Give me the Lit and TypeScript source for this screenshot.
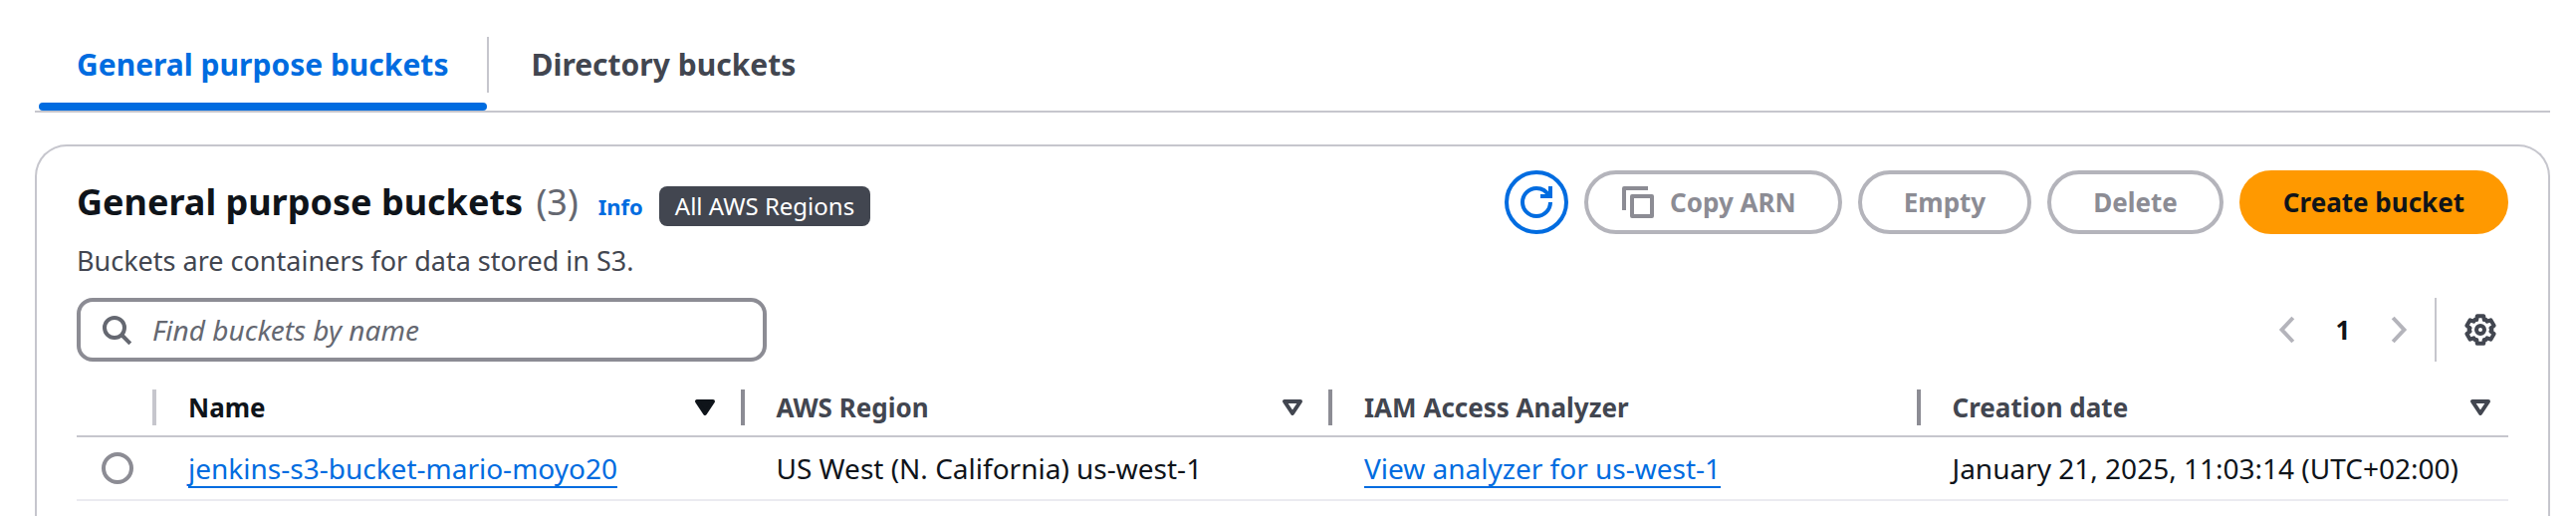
import { LitElement, html, css, svg } from "lit";
import { customElement, state } from "lit/decorators.js";
import { classMap } from "lit/directives/class-map.js";

interface Bucket {
  name: string;
  region: string;
  regionCode: string;
  created: string;
}

interface Column {
  label: string;
  sort: "active" | "idle" | "none";
}

const BUCKETS: Bucket[] = [
  {
    name: "jenkins-s3-bucket-mario-moyo20",
    region: "US West (N. California) us-west-1",
    regionCode: "us-west-1",
    created: "January 21, 2025, 11:03:14 (UTC+02:00)",
  },
];

const COLUMNS: Column[] = [
  { label: "Name", sort: "active" },
  { label: "AWS Region", sort: "idle" },
  { label: "IAM Access Analyzer", sort: "none" },
  { label: "Creation date", sort: "idle" },
];

const TABS = ["General purpose buckets", "Directory buckets"];

// Outline of a six-toothed gear centred in a 16-unit box.
const gearOutline = (): string => {
  const points: string[] = [];
  const add = (deg: number, r: number) => {
    const a = (deg * Math.PI) / 180;
    points.push(`${(8 + r * Math.sin(a)).toFixed(2)} ${(8 - r * Math.cos(a)).toFixed(2)}`);
  };
  for (let t = 0; t < 360; t += 60) {
    add(t - 21, 5.3);
    add(t - 13, 7.1);
    add(t + 13, 7.1);
    add(t + 21, 5.3);
    add(t + 30, 5.7);
  }
  return `M${points.join("L")}Z`;
};

const ICONS = {
  refresh: svg`<path d="M15 8c0 3.87-3.13 7-7 7s-7-3.13-7-7 3.13-7 7-7c2.79 0 5.2 1.63 6.33 4" /><path d="M10 5h5V0" />`,
  copy: svg`<path d="M5 5h10v10H5z" stroke-linejoin="round" /><path d="M1 12V1h12" stroke-linejoin="round" />`,
  search: svg`<circle cx="7" cy="7" r="5" /><path d="m10.5 10.5 4.4 4.4" />`,
  previous: svg`<path d="M11.4 2 5.8 8l5.6 6" />`,
  next: svg`<path d="m4.6 2 5.6 6-5.6 6" />`,
  settings: svg`<path d=${gearOutline()} stroke-linejoin="round" /><circle cx="8" cy="8" r="2" />`,
  sort: svg`<path d="M4 5h8l-4 6z" stroke-linejoin="round" />`,
  sorted: svg`<path d="M4 5h8l-4 6z" stroke-linejoin="round" fill="currentColor" />`,
};

const icon = (name: keyof typeof ICONS) =>
  html`<svg class="icon" viewBox="0 0 16 16" aria-hidden="true">${ICONS[name]}</svg>`;

@customElement("app-root")
export class AppRoot extends LitElement {
  @state() private tab = 0;

  static styles = css`
    :host {
      display: flex;
      flex-direction: column;
      box-sizing: border-box;
      height: 100vh;
      overflow: hidden;
      padding: 37px 26px 0 35px;
      background: #fff;
      color: #0f141a;
      font: 27px/44px "Noto Sans", "Open Sans", sans-serif;
    }
    * {
      box-sizing: border-box;
    }
    button,
    input {
      margin: 0;
      font: inherit;
      color: inherit;
    }
    button {
      padding: 0;
      border: 0;
      background: none;
      white-space: nowrap;
      cursor: pointer;
    }
    a {
      color: #006ce0;
      text-decoration: none;
    }
    .icon {
      display: block;
      flex: none;
      width: 32px;
      height: 32px;
      fill: none;
      stroke: currentColor;
      stroke-width: 2;
    }
    .tabs {
      display: flex;
      flex: none;
      padding-left: 4px;
      border-bottom: 2px solid #c6c6cd;
    }
    .tab {
      display: flex;
      flex-direction: column;
      gap: 10px;
      font-size: 30px;
      font-weight: 700;
      line-height: 56px;
      color: #424650;
    }
    .tab-label {
      padding: 0 39px 0 38px;
    }
    .tab + .tab .tab-label {
      padding-left: 42px;
      border-left: 2px solid #c6c6cd;
    }
    .tab::after {
      content: "";
      width: 100%;
      height: 8px;
      border-radius: 4px;
    }
    .tab.selected {
      color: #006ce0;
    }
    .tab.selected::after {
      background: #006ce0;
    }
    .card {
      flex: 1;
      margin-top: 32px;
      padding: 24px 40px 0;
      border: 2px solid #c6c6cd;
      border-bottom: 0;
      border-radius: 32px 32px 0 0;
    }
    .header,
    .tools {
      display: flex;
      justify-content: space-between;
      gap: 16px;
    }
    .title {
      display: flex;
      align-items: baseline;
      gap: 16px;
    }
    h1 {
      margin: 0 4px 0 0;
      font-size: 36px;
      line-height: 64px;
    }
    .count {
      margin-left: 4px;
      font-weight: 400;
      color: #656871;
    }
    .info {
      font-size: 22px;
      font-weight: 700;
    }
    .badge {
      padding: 0 16px;
      border-radius: 8px;
      background: #424650;
      color: #fff;
      font-size: 24px;
      line-height: 40px;
    }
    .description {
      margin: 5px 0 15px;
      color: #424650;
    }
    .actions {
      display: flex;
      gap: 16px;
    }
    .button {
      display: flex;
      align-items: center;
      gap: 16px;
      height: 64px;
      padding: 0 42px;
      border: 4px solid #b4b4bb;
      border-radius: 32px;
      font-size: 26px;
      font-weight: 700;
      color: #8c8c94;
    }
    .button.with-icon {
      padding-left: 34px;
    }
    .button.round {
      width: 64px;
      padding: 0 12px;
      border-color: #006ce0;
      color: #006ce0;
    }
    .button.primary {
      padding: 0 40px;
      border-color: #ff9900;
      background: #ff9900;
      color: #0f141a;
    }
    .search {
      display: flex;
      align-items: center;
      gap: 20px;
      width: 693px;
      height: 64px;
      padding: 0 20px;
      border: 4px solid #8c8c94;
      border-radius: 16px;
      color: #656871;
    }
    .search input {
      flex: 1;
      min-width: 0;
      height: 100%;
      padding: 0;
      border: 0;
      outline: 0;
      background: none;
      font-size: 28px;
      color: #0f141a;
    }
    .search input::placeholder {
      color: #656871;
      font-style: italic;
      opacity: 1;
    }
    .paging {
      display: flex;
      align-items: center;
      padding-right: 12px;
      color: #424650;
    }
    .paging .arrow {
      color: #b4b4bb;
    }
    .page {
      width: 82px;
      font-size: 26px;
      font-weight: 700;
      color: #0f141a;
    }
    .settings {
      height: 64px;
      margin-left: 19px;
      padding-left: 28px;
      border-left: 2px solid #c6c6cd;
    }
    table {
      width: 100%;
      margin-top: 28px;
      border-collapse: separate;
      border-spacing: 0;
      table-layout: fixed;
    }
    .select-column {
      width: 80px;
    }
    th {
      padding: 0 0 10px;
      border-bottom: 2px solid #c6c6cd;
      font-size: 26px;
      line-height: 36px;
      text-align: left;
      color: #424650;
    }
    th.sorted {
      color: #0f141a;
    }
    .head {
      display: flex;
      align-items: center;
      justify-content: space-between;
      height: 36px;
      padding: 0 20px 0 32px;
      border-right: 4px solid #8c8c94;
    }
    .head.select {
      border-color: #c6c6cd;
    }
    th:last-child .head {
      padding-right: 12px;
      border-right: 0;
    }
    td {
      height: 64px;
      padding: 0 0 0 32px;
      border-bottom: 2px solid #ebebf0;
      font-size: 28px;
      line-height: 36px;
      white-space: nowrap;
    }
    td.pick {
      padding-left: 25px;
    }
    td a {
      text-decoration: underline 2px;
      text-underline-offset: 7px;
      text-decoration-skip-ink: none;
    }
    .radio {
      display: block;
      width: 32px;
      height: 32px;
      appearance: none;
      border: 4px solid #8c8c94;
      border-radius: 50%;
      background: #fff;
    }
    .radio:checked {
      border: 10px solid #006ce0;
    }
  `;

  private renderHead(column: Column) {
    return html`<th scope="col" class=${classMap({ sorted: column.sort === "active" })}>
      <div class="head">
        <span>${column.label}</span>
        ${column.sort === "none"
          ? null
          : html`<button type="button" aria-label="Sort by ${column.label}">
              ${icon(column.sort === "active" ? "sorted" : "sort")}
            </button>`}
      </div>
    </th>`;
  }

  private renderRow(bucket: Bucket) {
    return html`<tr>
      <td class="pick">
        <input class="radio" type="radio" name="bucket" aria-label=${bucket.name} />
      </td>
      <td><a href="#bucket">${bucket.name}</a></td>
      <td>${bucket.region}</td>
      <td><a href="#analyzer">View analyzer for ${bucket.regionCode}</a></td>
      <td>${bucket.created}</td>
    </tr>`;
  }

  render() {
    return html`
      <div class="tabs" role="tablist">
        ${TABS.map(
          (label, i) => html`<button
            type="button"
            role="tab"
            aria-selected=${i === this.tab}
            class=${classMap({ tab: true, selected: i === this.tab })}
            @click=${() => (this.tab = i)}
          ><span class="tab-label">${label}</span></button>`
        )}
      </div>
      <section class="card">
        <div class="header">
          <div class="title">
            <h1>General purpose buckets <span class="count">(3)</span></h1>
            <a class="info" href="#info">Info</a>
            <span class="badge">All AWS Regions</span>
          </div>
          <div class="actions">
            <button type="button" class="button round" aria-label="Refresh">${icon("refresh")}</button>
            <button type="button" class="button with-icon" disabled>${icon("copy")}Copy ARN</button>
            <button type="button" class="button" disabled>Empty</button>
            <button type="button" class="button" disabled>Delete</button>
            <button type="button" class="button primary">Create bucket</button>
          </div>
        </div>
        <p class="description">Buckets are containers for data stored in S3.</p>
        <div class="tools">
          <label class="search">
            ${icon("search")}
            <input type="text" placeholder="Find buckets by name" aria-label="Find buckets by name" />
          </label>
          <div class="paging">
            <button type="button" class="arrow" disabled aria-label="Previous page">${icon("previous")}</button>
            <button type="button" class="page">1</button>
            <button type="button" class="arrow" disabled aria-label="Next page">${icon("next")}</button>
            <button type="button" class="settings" aria-label="Preferences">${icon("settings")}</button>
          </div>
        </div>
        <table>
          <thead>
            <tr>
              <th class="select-column" aria-label="Selection"><div class="head select"></div></th>
              ${COLUMNS.map((c) => this.renderHead(c))}
            </tr>
          </thead>
          <tbody>
            ${BUCKETS.map((b) => this.renderRow(b))}
          </tbody>
        </table>
      </section>
    `;
  }
}
